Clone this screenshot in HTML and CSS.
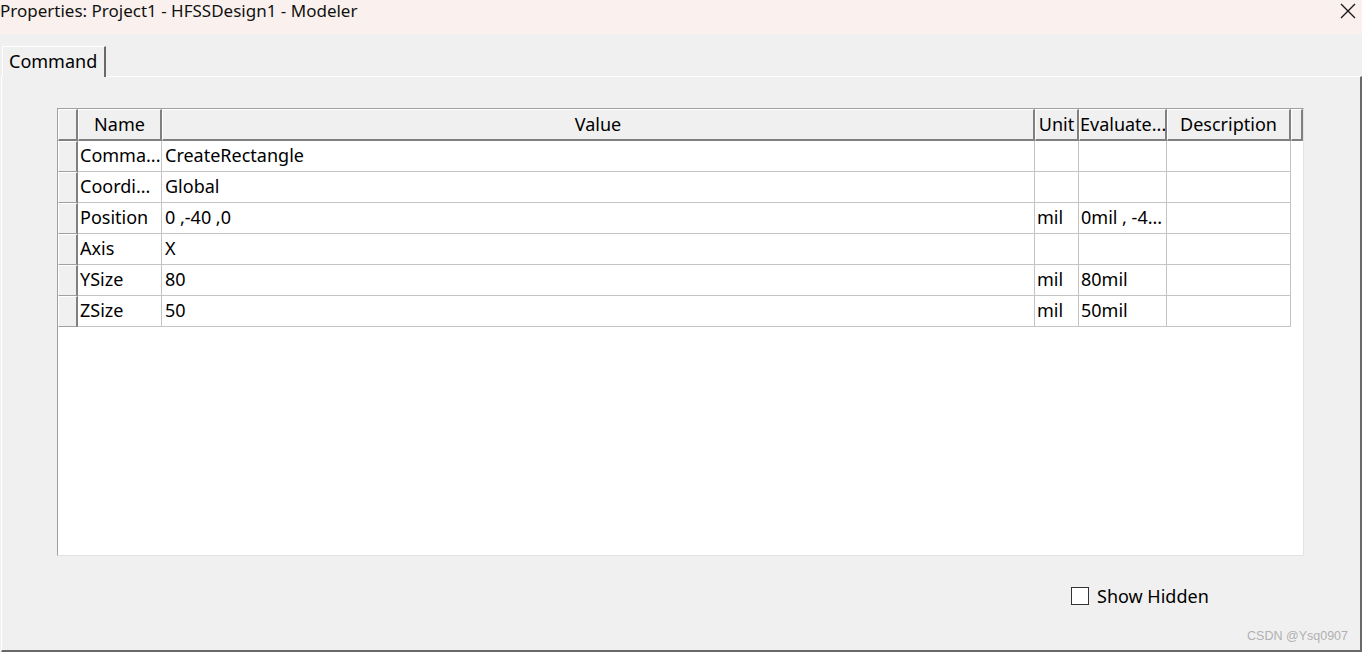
FILE: index.html
```html
<!DOCTYPE html>
<html>
<head>
<meta charset="utf-8">
<link rel="stylesheet" href="styles.css">
</head>
<body>
<div class="window">
  <div class="titlebar">
    <span class="title">Properties: Project1 - HFSSDesign1 - Modeler</span>
    <svg class="close" width="16" height="16" viewBox="0 0 16 16"><path d="M1 1 L15 15 M15 1 L1 15" stroke="#1a1a1a" stroke-width="1.4" fill="none"/></svg>
  </div>
  <div class="body">
    <div class="tabs"><div class="tab">Command</div></div>
    <div class="panel">
      <div class="grid">
        <div class="row head">
          <div class="c rh hc"></div>
          <div class="c name hc">Name</div>
          <div class="c value hc">Value</div>
          <div class="c unit hc">Unit</div>
          <div class="c eval hc">Evaluate...</div>
          <div class="c desc hc">Description</div>
          <div class="c extra hc"></div>
        </div>
        <div class="row"><div class="c rh"></div><div class="c name">Comma...</div><div class="c value">CreateRectangle</div><div class="c unit"></div><div class="c eval"></div><div class="c desc"></div></div>
        <div class="row"><div class="c rh"></div><div class="c name">Coordi...</div><div class="c value">Global</div><div class="c unit"></div><div class="c eval"></div><div class="c desc"></div></div>
        <div class="row"><div class="c rh"></div><div class="c name">Position</div><div class="c value">0 ,-40 ,0</div><div class="c unit">mil</div><div class="c eval">0mil , -4...</div><div class="c desc"></div></div>
        <div class="row"><div class="c rh"></div><div class="c name">Axis</div><div class="c value">X</div><div class="c unit"></div><div class="c eval"></div><div class="c desc"></div></div>
        <div class="row"><div class="c rh"></div><div class="c name">YSize</div><div class="c value">80</div><div class="c unit">mil</div><div class="c eval">80mil</div><div class="c desc"></div></div>
        <div class="row"><div class="c rh"></div><div class="c name">ZSize</div><div class="c value">50</div><div class="c unit">mil</div><div class="c eval">50mil</div><div class="c desc"></div></div>
      </div>
      <div class="footer">
        <label class="check"><span class="box"></span>Show Hidden</label>
      </div>
      <div class="watermark">CSDN @Ysq0907</div>
    </div>
  </div>
</div>
</body>
</html>
```
FILE: styles.css
```css
* { box-sizing: border-box; }
html, body { margin: 0; padding: 0; }
body {
  width: 1362px;
  height: 652px;
  overflow: hidden;
  font-family: "Noto Sans", "Open Sans", sans-serif;
  font-size: 18px;
  color: #000;
  background: #f0f0f0;
}
.window { width: 1362px; height: 652px; display: flex; flex-direction: column; }
.titlebar {
  height: 34px;
  background: #faf1ee;
  display: flex;
  justify-content: space-between;
  align-items: flex-start;
  padding: 0 6px 0 0;
}
.title { line-height: 22px; font-size: 17px; color: #111; }
.close { margin-top: 3px; }
.body { flex: 1; display: flex; flex-direction: column; background: #f0f0f0; }
.tabs { padding: 12px 0 0 2px; height: 43px; display: flex; }
.tab {
  height: 31px;
  padding: 0 0 0 6px;
  width: 104px;
  border-top: 1px solid #ffffff;
  border-left: 1px solid #ffffff;
  border-right: 2px solid #696969;
  line-height: 28px;
  font-size: 18px;
  position: relative;
  z-index: 1;
  background: #f0f0f0;
}
.panel {
  flex: 1;
  margin-top: -1px;
  margin-left: 1px;
  border-top: 1px solid #ffffff;
  border-left: 1px solid #ffffff;
  border-right: 2px solid #696969;
  border-bottom: 2px solid #696969;
  padding: 31px 0 0 55px;
  display: flex;
  flex-direction: column;
}
.grid {
  width: 1247px;
  height: 448px;
  background: #ffffff;
  border-top: 1px solid #a0a0a0;
  border-left: 1px solid #a0a0a0;
  border-right: 1px solid #e3e3e3;
  border-bottom: 1px solid #e3e3e3;
}
.row { display: flex; height: 31px; }
.head { height: 32px; }
.head .c { height: 32px; }
.c {
  height: 31px;
  border-right: 1px solid #c4c4c4;
  border-bottom: 1px solid #c4c4c4;
  white-space: nowrap;
  overflow: hidden;
  line-height: 29px;
  padding-left: 3px;
}
.rh { width: 20px; background: #f0f0f0; border-top: 1px solid #fff; border-left: 1px solid #fff; border-right: 2px solid #808080; border-bottom: 1px solid #a0a0a0; }
.name { width: 84px; padding-left: 2px; }
.value { width: 873px; }
.unit { width: 44px; padding-left: 2px; }
.eval { width: 88px; padding-left: 2px; }
.desc { width: 124px; }
.extra { width: 12px; }
.hc {
  background: #f0f0f0;
  border-top: 1px solid #ffffff;
  border-left: 1px solid #ffffff;
  border-right: 2px solid #808080;
  border-bottom: 2px solid #808080;
  text-align: center;
  padding: 0;
  line-height: 28px;
}
.footer { display: flex; padding: 29px 0 0 1014px; }
.check { display: flex; align-items: center; font-size: 18px; line-height: 22px; }
.box { width: 18px; height: 18px; background: #fff; border: 1px solid #333; margin-right: 8px; }
.watermark {
  margin-top: auto;
  align-self: flex-end;
  font-family: "Liberation Sans", Arial, sans-serif;
  font-size: 12.5px;
  color: #b0b0b0;
  padding: 0 12px 7px 0;
}
```
